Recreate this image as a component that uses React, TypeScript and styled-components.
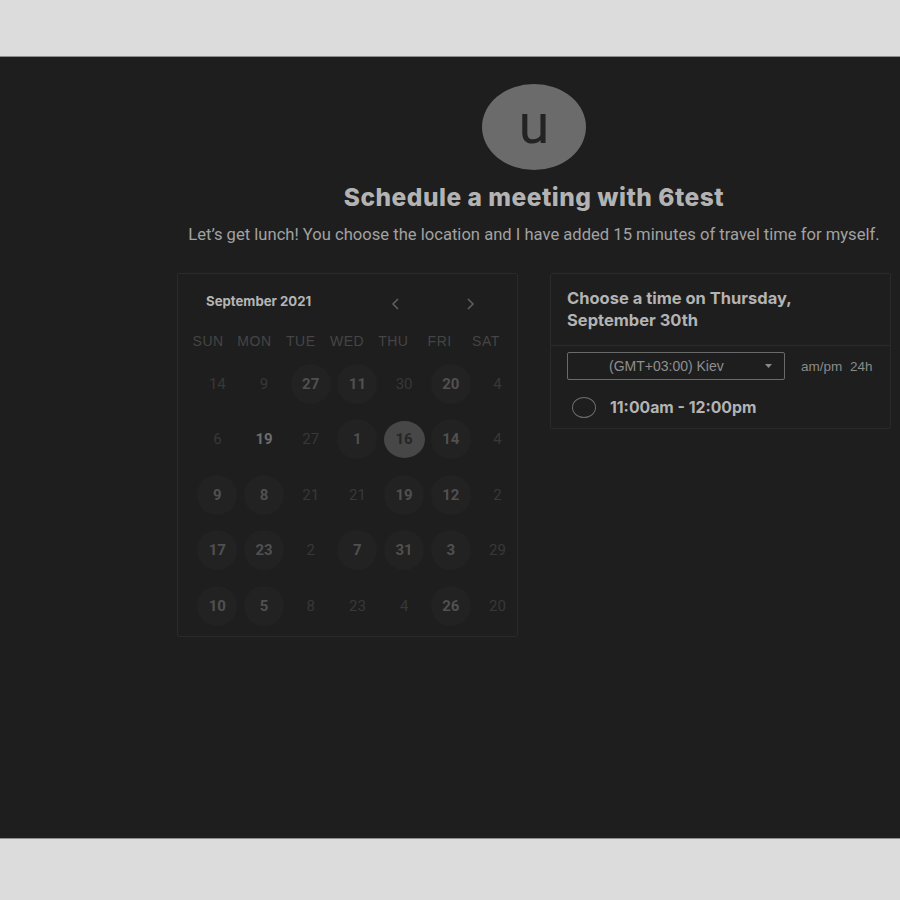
import React from "react";
import styled, { createGlobalStyle } from "styled-components";

const Global = createGlobalStyle`
  html, body { margin: 0; padding: 0; background: #dcdcdc; }
  body { font-family: Inter, "Liberation Sans", sans-serif; }
  * { box-sizing: border-box; }
`;

const Page = styled.div`
  padding-top: 56px;
  height: 900px;
  background: #dcdcdc;
`;

const Stage = styled.div`
  height: 783px;
  background: #1e1e1e;
  border-top: 1px solid #8d8d8d;
  border-bottom: 1px solid #8d8d8d;
  overflow: hidden;
`;

const Content = styled.div`
  margin-left: 177px;
  width: 714px;
  padding-top: 27px;
  display: flex;
  flex-direction: column;
  align-items: center;
`;

const Avatar = styled.div`
  width: 104px;
  height: 86px;
  border-radius: 50%;
  background: #6b6b6b;
  display: flex;
  align-items: center;
  justify-content: center;
  font-family: Roboto, sans-serif;
  font-size: 56px;
  line-height: 1;
  color: #232323;
  padding-bottom: 6px;
`;

const Title = styled.h1`
  margin: 13px 0 0;
  font-family: Inter, sans-serif;
  font-weight: 800;
  font-size: 24.5px;
  letter-spacing: 0.5px;
  line-height: 28px;
  color: #b3b3b3;
  white-space: nowrap;
`;

const Subtitle = styled.p`
  margin: 14px 0 0;
  font-family: Roboto, sans-serif;
  font-size: 16.6px;
  line-height: 19px;
  color: #a2a2a2;
  white-space: nowrap;
`;

const Cards = styled.div`
  margin-top: 29px;
  width: 100%;
  display: flex;
  align-items: flex-start;
  gap: 32px;
`;

const CalendarCard = styled.div`
  width: 341px;
  height: 364px;
  flex: none;
  border: 1px solid #2a2a2a;
  border-radius: 2px;
  padding-top: 17px;
`;

const CalHeader = styled.div`
  display: grid;
  grid-template-columns: 184px 76px 10px;
  align-items: center;
  height: 20px;
  padding-left: 28px;
`;

const MonthLabel = styled.div`
  font-family: Inter, sans-serif;
  font-weight: 700;
  font-size: 13.2px;
  color: #b5b5b5;
`;

const NavArrow = styled.svg`
  width: 10px;
  height: 14px;
  margin-top: 6px;
`;

const WeekRow = styled.div`
  margin-top: 22px;
  padding-left: 7px;
  display: grid;
  grid-template-columns: repeat(7, 46.3px);
  height: 16px;
  align-items: center;
`;

const WeekDay = styled.div`
  text-align: center;
  font-family: "Liberation Sans", sans-serif;
  font-size: 14px;
  letter-spacing: 0.5px;
  color: #454545;
`;

const DaysGrid = styled.div`
  margin-top: 7px;
  margin-left: 16px;
  display: grid;
  grid-template-columns: repeat(7, 46.7px);
  grid-auto-rows: 55.5px;
`;

const DayCell = styled.div`
  display: flex;
  align-items: center;
  justify-content: center;
`;

type Kind = "dim" | "open" | "plain" | "selected";

const Day = styled.div<{ $kind: Kind }>`
  width: ${(p) => (p.$kind === "selected" ? "41px" : "40px")};
  height: ${(p) => (p.$kind === "selected" ? "37px" : "40px")};
  border-radius: 50%;
  display: flex;
  align-items: center;
  justify-content: center;
  font-family: Roboto, sans-serif;
  font-size: 15px;
  font-weight: ${(p) => (p.$kind === "dim" ? 400 : 700)};
  color: ${(p) =>
    p.$kind === "dim"
      ? "#383838"
      : p.$kind === "plain"
      ? "#6c6c6c"
      : p.$kind === "selected"
      ? "#262626"
      : "#505050"};
  background: ${(p) =>
    p.$kind === "open" ? "#222222" : p.$kind === "selected" ? "#474747" : "transparent"};
`;

const TimeCard = styled.div`
  width: 341px;
  flex: none;
  border: 1px solid #2a2a2a;
  border-radius: 2px;
`;

const TimeHeader = styled.div`
  padding: 13px 16px 14px;
  border-bottom: 1px solid #2a2a2a;
  font-family: Inter, sans-serif;
  font-weight: 700;
  font-size: 16.5px;
  line-height: 22px;
  color: #b3b3b3;
`;

const TimeBody = styled.div`
  padding: 6px 16px 10px;
`;

const ZoneRow = styled.div`
  display: flex;
  align-items: center;
`;

const Select = styled.div`
  width: 218px;
  height: 28px;
  border: 1px solid #6a6a6a;
  border-radius: 2px;
  display: flex;
  align-items: center;
  padding-left: 41px;
  padding-right: 12px;
  font-family: "Liberation Sans", sans-serif;
  font-size: 14px;
  color: #8e8e8e;
`;

const SelectText = styled.span`
  flex: 1;
`;

const Caret = styled.svg`
  width: 7px;
  height: 4px;
`;

const FormatToggle = styled.div`
  margin-left: 16px;
  font-family: "Liberation Sans", sans-serif;
  font-size: 13.5px;
  color: #8a8a8a;
  word-spacing: 4px;
`;

const SlotRow = styled.div`
  margin-top: 17px;
  display: flex;
  align-items: center;
  gap: 14px;
  padding-left: 5px;
`;

const Radio = styled.div`
  width: 24px;
  height: 21px;
  border-radius: 50%;
  border: 1.5px solid #6c6c6c;
`;

const SlotText = styled.span`
  font-family: Inter, sans-serif;
  font-weight: 700;
  font-size: 15.8px;
  color: #b3b3b3;
`;

const weekdays = ["SUN", "MON", "TUE", "WED", "THU", "FRI", "SAT"];

const days: [string, Kind][] = [
  ["14", "dim"], ["9", "dim"], ["27", "open"], ["11", "open"], ["30", "dim"], ["20", "open"], ["4", "dim"],
  ["6", "dim"], ["19", "plain"], ["27", "dim"], ["1", "open"], ["16", "selected"], ["14", "open"], ["4", "dim"],
  ["9", "open"], ["8", "open"], ["21", "dim"], ["21", "dim"], ["19", "open"], ["12", "open"], ["2", "dim"],
  ["17", "open"], ["23", "open"], ["2", "dim"], ["7", "open"], ["31", "open"], ["3", "open"], ["29", "dim"],
  ["10", "open"], ["5", "open"], ["8", "dim"], ["23", "dim"], ["4", "dim"], ["26", "open"], ["20", "dim"],
];

export default function App() {
  return (
    <>
      <Global />
      <Page>
        <Stage>
          <Content>
            <Avatar>u</Avatar>
            <Title>Schedule a meeting with 6test</Title>
            <Subtitle>
              Let’s get lunch! You choose the location and I have added 15 minutes of travel time for myself.
            </Subtitle>
            <Cards>
              <CalendarCard>
                <CalHeader>
                  <MonthLabel>September 2021</MonthLabel>
                  <NavArrow viewBox="0 0 10 14">
                    <polyline points="8,2 3,7 8,12" fill="none" stroke="#5e5e5e" strokeWidth="1.6" />
                  </NavArrow>
                  <NavArrow viewBox="0 0 10 14">
                    <polyline points="2,2 7,7 2,12" fill="none" stroke="#5e5e5e" strokeWidth="1.6" />
                  </NavArrow>
                </CalHeader>
                <WeekRow>
                  {weekdays.map((w) => (
                    <WeekDay key={w}>{w}</WeekDay>
                  ))}
                </WeekRow>
                <DaysGrid>
                  {days.map(([n, k], i) => (
                    <DayCell key={i}>
                      <Day $kind={k}>{n}</Day>
                    </DayCell>
                  ))}
                </DaysGrid>
              </CalendarCard>
              <TimeCard>
                <TimeHeader>
                  Choose a time on Thursday,
                  <br />
                  September 30th
                </TimeHeader>
                <TimeBody>
                  <ZoneRow>
                    <Select>
                      <SelectText>(GMT+03:00) Kiev</SelectText>
                      <Caret viewBox="0 0 7 4">
                        <polygon points="0,0 7,0 3.5,4" fill="#8a8a8a" />
                      </Caret>
                    </Select>
                    <FormatToggle>am/pm 24h</FormatToggle>
                  </ZoneRow>
                  <SlotRow>
                    <Radio />
                    <SlotText>11:00am - 12:00pm</SlotText>
                  </SlotRow>
                </TimeBody>
              </TimeCard>
            </Cards>
          </Content>
        </Stage>
      </Page>
    </>
  );
}
